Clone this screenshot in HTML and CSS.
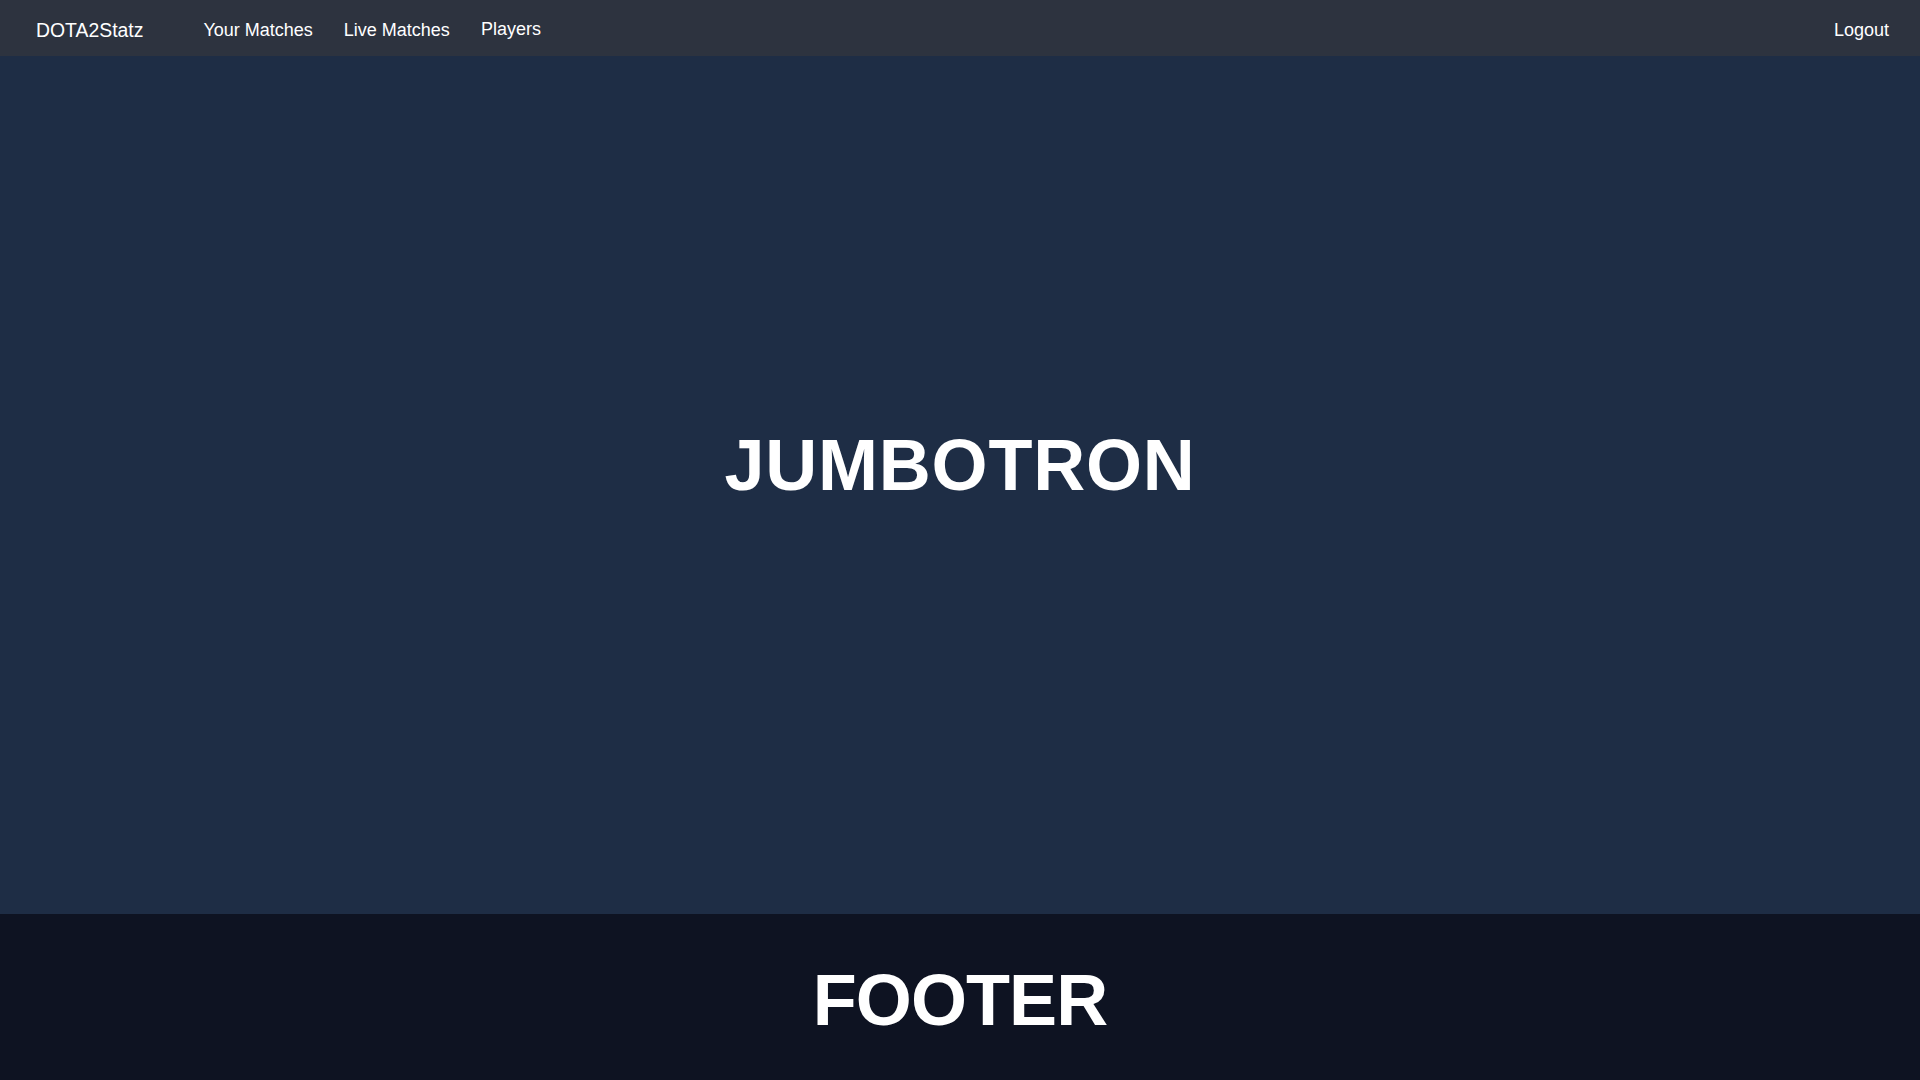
FILE: index.html
```html
<!DOCTYPE html>
<html lang="en">
<head>
<meta charset="utf-8">
<title>DOTA2Statz</title>
<link rel="stylesheet" href="styles.css">
</head>
<body>
<div class="page">
  <nav class="navbar">
    <a class="brand" href="#">DOTA2Statz</a>
    <div class="nav-links">
      <a class="nav-link" href="#">Your Matches</a>
      <a class="nav-link" href="#">Live Matches</a>
      <a class="nav-link players" href="#">Players</a>
    </div>
    <a class="nav-link logout" href="#">Logout</a>
  </nav>
  <main class="jumbotron">
    <h1 class="big-title jumbo-title">JUMBOTRON</h1>
  </main>
  <footer class="footer">
    <h2 class="big-title footer-title">FOOTER</h2>
  </footer>
</div>
</body>
</html>
```
FILE: styles.css
```css
* { box-sizing: border-box; }
html, body {
  margin: 0;
  padding: 0;
  height: 100%;
}
body {
  font-family: "Liberation Sans", Helvetica, Arial, sans-serif;
  color: #ffffff;
  background: #0e1322;
}
.page {
  display: flex;
  flex-direction: column;
  height: 1080px;
}
.navbar {
  height: 56px;
  flex: 0 0 56px;
  background: #2d333f;
  display: flex;
  align-items: center;
  padding: 5px 31px 0 36px;
}
.brand {
  color: #ffffff;
  text-decoration: none;
  font-size: 19.4px;
  margin-right: 60px;
}
.nav-links {
  display: flex;
  gap: 31px;
  flex: 1;
}
.nav-link {
  color: #ffffff;
  text-decoration: none;
  font-size: 18px;
}
.players {
  position: relative;
  top: -1px;
}
.jumbotron {
  flex: 0 0 858px;
  background: #1e2d45;
  display: flex;
  align-items: center;
  justify-content: center;
  padding-bottom: 40px;
}
.footer {
  flex: 1;
  background: #0e1322;
  display: flex;
  align-items: center;
  justify-content: center;
  padding-top: 6px;
}
.big-title {
  margin: 0;
  font-size: 72px;
  line-height: 1;
  font-weight: 700;
}
.jumbo-title {
  letter-spacing: 0.8px;
}
.footer-title {
  letter-spacing: -0.9px;
}
```
